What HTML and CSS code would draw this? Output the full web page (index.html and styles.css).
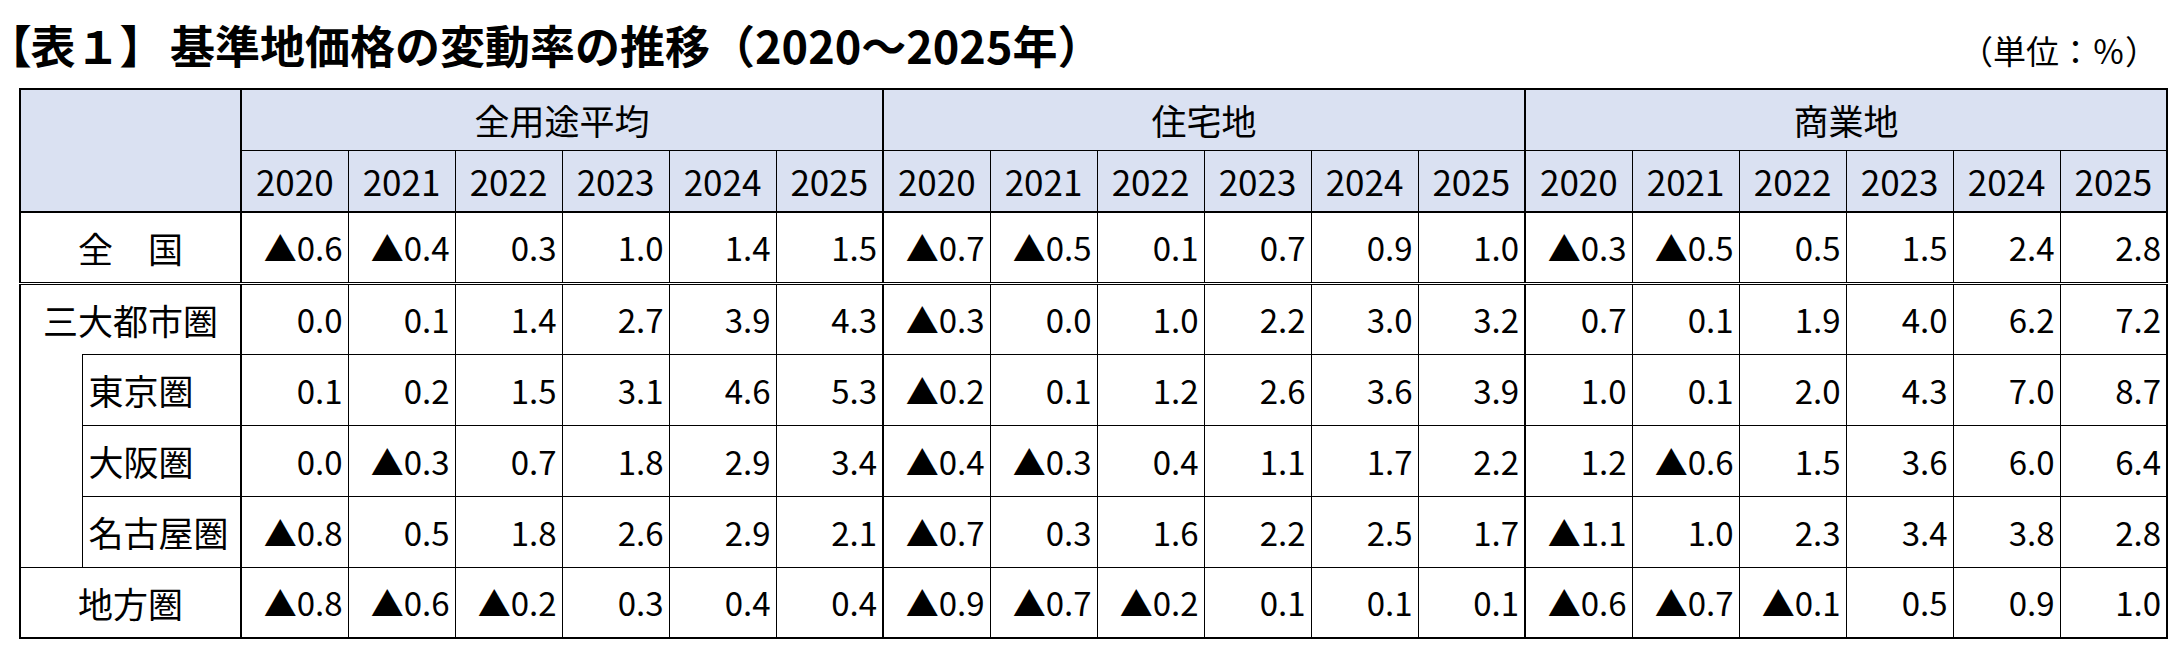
FILE: index.html
```html
<!DOCTYPE html>
<html lang="ja">
<head>
<meta charset="utf-8">
<title>基準地価格の変動率の推移</title>
<link rel="stylesheet" href="styles.css">
</head>
<body>
<div class="page">
  <div class="head">
    <h1 class="title"><span class="tag"><span class="br">【</span>表１<span class="br">】</span></span><span class="name">基準地価格の変動率の推移（2020～2025年）</span></h1>
    <div class="unit">（単位：％）</div>
  </div>
  <table class="tbl">
    <colgroup>
      <col class="c-indent"><col class="c-label">
      <col class="c-num"><col class="c-num"><col class="c-num"><col class="c-num"><col class="c-num"><col class="c-num">
      <col class="c-num"><col class="c-num"><col class="c-num"><col class="c-num"><col class="c-num"><col class="c-num">
      <col class="c-num"><col class="c-num"><col class="c-num"><col class="c-num"><col class="c-num"><col class="c-num">
    </colgroup>
    <thead>
      <tr class="hr1">
        <th class="corner" colspan="2" rowspan="2"></th>
        <th class="grp" colspan="6">全用途平均</th>
        <th class="grp gs" colspan="6">住宅地</th>
        <th class="grp gs" colspan="6">商業地</th>
      </tr>
      <tr class="hr2">
        <th>2020</th><th>2021</th><th>2022</th><th>2023</th><th>2024</th><th>2025</th>
        <th class="gs">2020</th><th>2021</th><th>2022</th><th>2023</th><th>2024</th><th>2025</th>
        <th class="gs">2020</th><th>2021</th><th>2022</th><th>2023</th><th>2024</th><th>2025</th>
      </tr>
    </thead>
    <tbody>
      <tr class="r-all">
        <td class="lbl center" colspan="2">全　国</td>
        <td>▲0.6</td><td>▲0.4</td><td>0.3</td><td>1.0</td><td>1.4</td><td>1.5</td>
        <td class="gs">▲0.7</td><td>▲0.5</td><td>0.1</td><td>0.7</td><td>0.9</td><td>1.0</td>
        <td class="gs">▲0.3</td><td>▲0.5</td><td>0.5</td><td>1.5</td><td>2.4</td><td>2.8</td>
      </tr>
      <tr>
        <td class="lbl center metro" colspan="2">三大都市圏</td>
        <td>0.0</td><td>0.1</td><td>1.4</td><td>2.7</td><td>3.9</td><td>4.3</td>
        <td class="gs">▲0.3</td><td>0.0</td><td>1.0</td><td>2.2</td><td>3.0</td><td>3.2</td>
        <td class="gs">0.7</td><td>0.1</td><td>1.9</td><td>4.0</td><td>6.2</td><td>7.2</td>
      </tr>
      <tr>
        <td class="indent" rowspan="3"></td>
        <td class="lbl sub">東京圏</td>
        <td>0.1</td><td>0.2</td><td>1.5</td><td>3.1</td><td>4.6</td><td>5.3</td>
        <td class="gs">▲0.2</td><td>0.1</td><td>1.2</td><td>2.6</td><td>3.6</td><td>3.9</td>
        <td class="gs">1.0</td><td>0.1</td><td>2.0</td><td>4.3</td><td>7.0</td><td>8.7</td>
      </tr>
      <tr>
        <td class="lbl sub">大阪圏</td>
        <td>0.0</td><td>▲0.3</td><td>0.7</td><td>1.8</td><td>2.9</td><td>3.4</td>
        <td class="gs">▲0.4</td><td>▲0.3</td><td>0.4</td><td>1.1</td><td>1.7</td><td>2.2</td>
        <td class="gs">1.2</td><td>▲0.6</td><td>1.5</td><td>3.6</td><td>6.0</td><td>6.4</td>
      </tr>
      <tr>
        <td class="lbl sub">名古屋圏</td>
        <td>▲0.8</td><td>0.5</td><td>1.8</td><td>2.6</td><td>2.9</td><td>2.1</td>
        <td class="gs">▲0.7</td><td>0.3</td><td>1.6</td><td>2.2</td><td>2.5</td><td>1.7</td>
        <td class="gs">▲1.1</td><td>1.0</td><td>2.3</td><td>3.4</td><td>3.8</td><td>2.8</td>
      </tr>
      <tr>
        <td class="lbl center" colspan="2">地方圏</td>
        <td>▲0.8</td><td>▲0.6</td><td>▲0.2</td><td>0.3</td><td>0.4</td><td>0.4</td>
        <td class="gs">▲0.9</td><td>▲0.7</td><td>▲0.2</td><td>0.1</td><td>0.1</td><td>0.1</td>
        <td class="gs">▲0.6</td><td>▲0.7</td><td>▲0.1</td><td>0.5</td><td>0.9</td><td>1.0</td>
      </tr>
    </tbody>
  </table>
</div>
</body>
</html>
```
FILE: styles.css
```css
html, body {
  margin: 0;
  padding: 0;
  background: #ffffff;
}

body {
  font-family: "Noto Sans CJK JP", "Noto Sans", sans-serif;
  color: #000000;
}

.page {
  width: 2183px;
}

.head {
  display: flex;
  justify-content: space-between;
  align-items: baseline;
  height: 88px;
  box-sizing: border-box;
  padding: 21px 25px 0 8px;
}

.title {
  margin: 0;
  font-size: 45px;
  line-height: 48px;
  font-weight: 700;
  white-space: nowrap;
}

.title .br {
  font-feature-settings: "palt" 1;
}

.title .name {
  margin-left: 27px;
}

.unit {
  font-size: 33px;
  line-height: 40px;
  white-space: nowrap;
}

.tbl {
  border-collapse: collapse;
  table-layout: fixed;
  width: 2149px;
  margin-left: 19px;
  border: 2px solid #000;
}

.c-indent { width: 62px; }
.c-label { width: 159px; }
.c-num { width: 107px; }

.tbl th,
.tbl td {
  border: 1px solid #000;
  padding: 0 6px;
  white-space: nowrap;
  overflow: hidden;
  font-weight: 400;
}

.tbl th {
  background: #dae1f2;
  font-size: 35px;
  text-align: center;
}

.hr1 { height: 61px; }
.hr2 { height: 62px; }
.hr2 th { border-bottom: 2px solid #000; }

.corner { border-right: 2px solid #000 !important; border-bottom: 2px solid #000 !important; }
.tbl .gs { border-left: 2px solid #000; }

.tbl tbody tr { height: 71px; }

.tbl td {
  font-size: 33px;
  text-align: right;
  padding-right: 5px;
}

.tbl td.lbl {
  font-size: 35px;
  border-right: 2px solid #000;
}

.tbl td.center {
  text-align: center;
  padding: 0;
}

.tbl td.sub {
  text-align: left;
  padding-left: 6px;
}

.tbl td.metro {
  border-bottom: none;
}

.tbl td.indent {
  border-top: none;
  border-right: 1px solid #000;
}

.r-all td {
  border-bottom: 3px double #000;
}
```
